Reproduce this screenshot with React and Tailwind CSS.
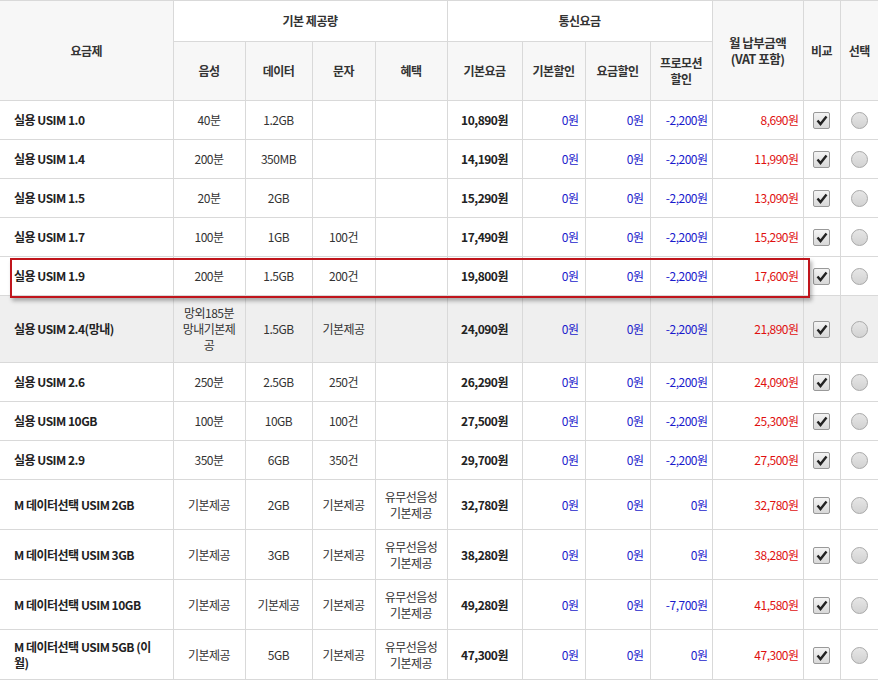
import React from 'react';

const rows = [
  { name: '실용 USIM 1.0', v: '40분', d: '1.2GB', s: '', b: '', base: '10,890원', promo: '-2,200원', total: '8,690원' },
  { name: '실용 USIM 1.4', v: '200분', d: '350MB', s: '', b: '', base: '14,190원', promo: '-2,200원', total: '11,990원' },
  { name: '실용 USIM 1.5', v: '20분', d: '2GB', s: '', b: '', base: '15,290원', promo: '-2,200원', total: '13,090원' },
  { name: '실용 USIM 1.7', v: '100분', d: '1GB', s: '100건', b: '', base: '17,490원', promo: '-2,200원', total: '15,290원' },
  { name: '실용 USIM 1.9', v: '200분', d: '1.5GB', s: '200건', b: '', base: '19,800원', promo: '-2,200원', total: '17,600원' },
  { name: '실용 USIM 2.4(망내)', v: '망외185분 망내기본제공', d: '1.5GB', s: '기본제공', b: '', base: '24,090원', promo: '-2,200원', total: '21,890원', gray: true },
  { name: '실용 USIM 2.6', v: '250분', d: '2.5GB', s: '250건', b: '', base: '26,290원', promo: '-2,200원', total: '24,090원' },
  { name: '실용 USIM 10GB', v: '100분', d: '10GB', s: '100건', b: '', base: '27,500원', promo: '-2,200원', total: '25,300원' },
  { name: '실용 USIM 2.9', v: '350분', d: '6GB', s: '350건', b: '', base: '29,700원', promo: '-2,200원', total: '27,500원' },
  { name: 'M 데이터선택 USIM 2GB', v: '기본제공', d: '2GB', s: '기본제공', b: '유무선음성 기본제공', base: '32,780원', promo: '0원', total: '32,780원', tall: true },
  { name: 'M 데이터선택 USIM 3GB', v: '기본제공', d: '3GB', s: '기본제공', b: '유무선음성 기본제공', base: '38,280원', promo: '0원', total: '38,280원', tall: true },
  { name: 'M 데이터선택 USIM 10GB', v: '기본제공', d: '기본제공', s: '기본제공', b: '유무선음성 기본제공', base: '49,280원', promo: '-7,700원', total: '41,580원', tall: true },
  { name: 'M 데이터선택 USIM 5GB (이월)', v: '기본제공', d: '5GB', s: '기본제공', b: '유무선음성 기본제공', base: '47,300원', promo: '0원', total: '47,300원', tall: true },
];

const Check = () => (
  <span className="inline-flex items-center justify-center w-[17px] h-[17px] border border-[#999] rounded-[2px] bg-gradient-to-b from-[#f4f4f4] to-[#d8d8d8] align-middle">
    <svg width="12" height="11" viewBox="0 0 12 11"><path d="M1.5 5.5 L4.5 9 L10.5 1.5" fill="none" stroke="#222" strokeWidth="2.4" /></svg>
  </span>
);

const Radio = () => (
  <span className="inline-block w-[17px] h-[17px] rounded-full border border-[#aaa] bg-gradient-to-b from-[#e6e6e6] to-[#d2d2d2] align-middle" />
);

const th = 'border border-[#d9d9d9] bg-[#f7f7f7] font-bold text-[#333] text-center';
const td = 'border border-[#d9d9d9] text-center';

export default function App() {
  return (
    <div className="relative w-[878px] bg-white" style={{ fontFamily: '"Noto Sans CJK KR", "Noto Sans", sans-serif' }}>
      <table className="w-full border-collapse table-fixed text-[12px] text-[#333] tracking-[-0.5px] leading-[16px]">
        <colgroup>
          <col className="w-[173px]" /><col className="w-[72px]" /><col className="w-[67px]" /><col className="w-[63px]" /><col className="w-[72px]" />
          <col className="w-[75px]" /><col className="w-[63px]" /><col className="w-[65px]" /><col className="w-[62px]" />
          <col className="w-[91px]" /><col className="w-[37px]" /><col />
        </colgroup>
        <thead>
          <tr className="h-[41px]">
            <th rowSpan={2} className={th + ' border-l-0'}>요금제</th>
            <th colSpan={4} className={th + ' bg-white'}>기본 제공량</th>
            <th colSpan={4} className={th + ' bg-white'}>통신요금</th>
            <th rowSpan={2} className={th + ' text-[12.5px]'}>월 납부금액<br />(VAT 포함)</th>
            <th rowSpan={2} className={th}>비교</th>
            <th rowSpan={2} className={th + ' border-r-0'}>선택</th>
          </tr>
          <tr className="h-[59px]">
            <th className={th}>음성</th><th className={th}>데이터</th><th className={th}>문자</th><th className={th}>혜택</th>
            <th className={th}>기본요금</th><th className={th}>기본할인</th><th className={th}>요금할인</th><th className={th}>프로모션<br />할인</th>
          </tr>
        </thead>
        <tbody>
          {rows.map((r, i) => (
            <tr key={i} className={(r.gray ? 'bg-[#efefef] h-[67px]' : r.tall ? 'h-[50px]' : 'h-[39px]')}>
              <td className={td + ' border-l-0 text-left pl-[14px] pr-[14px] font-bold text-[#222]'}>{r.name}</td>
              <td className={td + ' px-[9px] break-all'}>{r.v}</td>
              <td className={td}>{r.d}</td>
              <td className={td}>{r.s}</td>
              <td className={td + ' px-2'}>{r.b}</td>
              <td className={td + ' font-bold text-[#222]'}>{r.base}</td>
              <td className={td + ' text-right pr-[6px] text-[#1a1acc]'}>0원</td>
              <td className={td + ' text-right pr-[6px] text-[#1a1acc]'}>0원</td>
              <td className={td + ' text-right pr-[4px] text-[#1a1acc]'}>{r.promo}</td>
              <td className={td + ' text-right pr-[4px] text-[#e01010]'}>{r.total}</td>
              <td className={td}><Check /></td>
              <td className={td + ' border-r-0'}><Radio /></td>
            </tr>
          ))}
        </tbody>
      </table>
      <div className="absolute left-[10px] top-[258px] w-[800px] h-[40px] border-2 border-[#c0151c] shadow-[2px_3px_4px_rgba(0,0,0,0.3)] pointer-events-none" />
    </div>
  );
}
